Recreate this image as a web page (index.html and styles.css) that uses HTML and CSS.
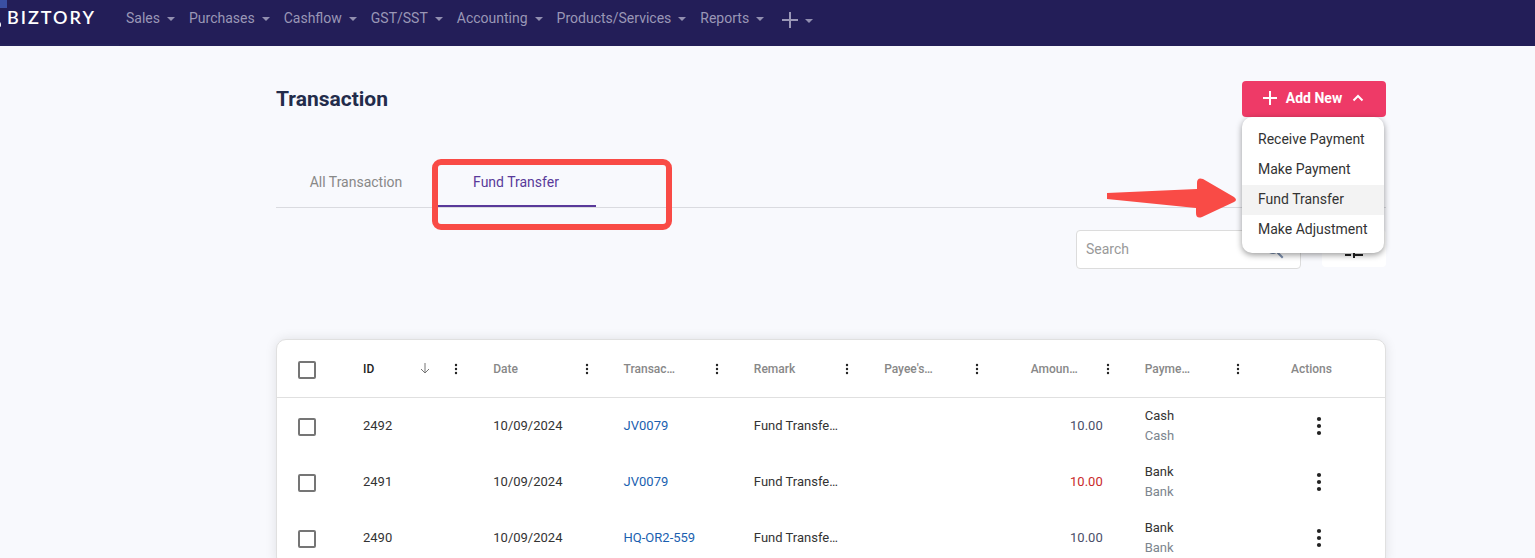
FILE: index.html
```
<!DOCTYPE html>
<html lang="en">
<head>
  <meta charset="UTF-8" />
  <meta name="viewport" content="width=device-width, initial-scale=1.0"/>
  <title>Transaction - Biztory</title>
  <link rel="stylesheet" href="styles.css">
</head>
<body>

<svg class="sprite" aria-hidden="true">
  <symbol id="dots" viewBox="0 0 24 24">
    <circle cx="12" cy="6" r="1.800"/><circle cx="12" cy="12" r="1.800"/><circle cx="12" cy="18" r="1.800"/>
  </symbol>
</svg>

<header class="navbar">
  <a class="brand" href="#">
    <svg class="brand-mark" viewBox="0 0 7 44" aria-hidden="true">
      <rect width="7" height="8" fill="#3a4fa3"/>
      <path d="M0 22q1 1 1 3t-1 2z" fill="#fff"/>
    </svg>
    BIZTORY
  </a>
  <nav class="menu">
    <a href="#">Sales</a>
    <a href="#">Purchases</a>
    <a href="#">Cashflow</a>
    <a href="#">GST/SST</a>
    <a href="#">Accounting</a>
    <a href="#">Products/Services</a>
    <a href="#">Reports</a>
    <a href="#" class="menu-add" aria-label="Add">
      <svg width="16" height="16" viewBox="0 0 16 16"><path d="M8 0v16M0 8h16" stroke="currentColor" stroke-width="2"/></svg>
    </a>
  </nav>
</header>

<main class="page">
  <div class="page-head">
    <h1>Transaction</h1>
    <div class="add-new">
      <button type="button" class="add-btn" aria-expanded="true">
        <svg width="16" height="16" viewBox="0 0 16 16"><path d="M8 1v14M1 8h14" stroke="currentColor" stroke-width="2"/></svg>
        <span>Add New</span>
        <svg width="12" height="12" viewBox="0 0 12 12"><path d="M1.500 8.500 6 4l4.500 4.500" fill="none" stroke="currentColor" stroke-width="2"/></svg>
      </button>
      <div class="dropdown">
        <a href="#">Receive Payment</a>
        <a href="#">Make Payment</a>
        <a href="#" class="hovered">Fund Transfer</a>
        <a href="#">Make Adjustment</a>
      </div>
      <svg class="arrow" width="130" height="40" viewBox="0 0 130 40" aria-hidden="true">
        <path d="M0 15 90 11V5q0-6 6-4l31 18q4 3 0 5L95 39q-6 2-6-4v-5L0 21z" fill="#f94b46"/>
      </svg>
    </div>
  </div>

  <nav class="tabs">
    <a href="#">All Transaction</a>
    <a href="#" class="active">Fund Transfer<span class="marker"></span></a>
  </nav>

  <div class="filters">
    <div class="search">
      <input type="text" placeholder="Search" aria-label="Search">
      <svg width="24" height="24" viewBox="0 0 24 24"><path fill="#7b8fae" d="M15.500 14h-.79l-.28-.27A6.470 6.470 0 0 0 16 9.500 6.500 6.500 0 1 0 9.500 16c1.610 0 3.090-.59 4.230-1.570l.27.28v.79l5 4.990L20.490 19l-4.990-5zm-6 0C7.010 14 5 11.990 5 9.500S7.010 5 9.500 5 14 7.010 14 9.500 11.990 14 9.500 14z"/></svg>
    </div>
    <button type="button" class="filter-btn" aria-label="Filter">
      <svg width="24" height="24" viewBox="0 0 24 24"><path d="M3 17v2h6v-2H3zM3 5v2h10V5H3zm10 16v-2h8v-2h-8v-2h-2v6h2zM7 9v2H3v2h4v2h2V9H7zm14 4v-2H11v2h10zm-6-4h2V7h4V5h-4V3h-2v6z"/></svg>
    </button>
  </div>

  <div class="card">
    <table>
      <colgroup>
        <col class="col-check">
        <col><col><col><col><col><col><col>
        <col class="col-actions">
      </colgroup>
      <thead>
        <tr>
          <th class="check"><input type="checkbox" aria-label="Select all"></th>
          <th class="sorted"><div class="th">
            <span>ID</span>
            <svg class="sort" width="16" height="16" viewBox="0 0 16 16"><path d="M8 2v10M4 8l4 4 4-4" fill="none" stroke="#757575"/></svg>
            <button type="button" aria-label="ID menu"><svg><use href="#dots"/></svg></button>
          </div></th>
          <th><div class="th"><span>Date</span><button type="button" aria-label="Date menu"><svg><use href="#dots"/></svg></button></div></th>
          <th><div class="th"><span>Transac…</span><button type="button" aria-label="Transaction menu"><svg><use href="#dots"/></svg></button></div></th>
          <th><div class="th"><span>Remark</span><button type="button" aria-label="Remark menu"><svg><use href="#dots"/></svg></button></div></th>
          <th><div class="th"><span>Payee's…</span><button type="button" aria-label="Payee menu"><svg><use href="#dots"/></svg></button></div></th>
          <th class="amount"><div class="th"><span>Amoun…</span><button type="button" aria-label="Amount menu"><svg><use href="#dots"/></svg></button></div></th>
          <th><div class="th"><span>Payme…</span><button type="button" aria-label="Payment menu"><svg><use href="#dots"/></svg></button></div></th>
          <th class="actions">Actions</th>
        </tr>
      </thead>
      <tbody>
        <tr>
          <td class="check"><input type="checkbox" aria-label="Select 2492"></td>
          <td>2492</td>
          <td>10/09/2024</td>
          <td><a href="#">JV0079</a></td>
          <td>Fund Transfe…</td>
          <td></td>
          <td class="amount">10.00</td>
          <td>Cash<small>Cash</small></td>
          <td class="actions"><button type="button" aria-label="Actions"><svg><use href="#dots"/></svg></button></td>
        </tr>
        <tr>
          <td class="check"><input type="checkbox" aria-label="Select 2491"></td>
          <td>2491</td>
          <td>10/09/2024</td>
          <td><a href="#">JV0079</a></td>
          <td>Fund Transfe…</td>
          <td></td>
          <td class="amount out">10.00</td>
          <td>Bank<small>Bank</small></td>
          <td class="actions"><button type="button" aria-label="Actions"><svg><use href="#dots"/></svg></button></td>
        </tr>
        <tr>
          <td class="check"><input type="checkbox" aria-label="Select 2490"></td>
          <td>2490</td>
          <td>10/09/2024</td>
          <td><a href="#">HQ-OR2-559</a></td>
          <td>Fund Transfe…</td>
          <td></td>
          <td class="amount">10.00</td>
          <td>Bank<small>Bank</small></td>
          <td class="actions"><button type="button" aria-label="Actions"><svg><use href="#dots"/></svg></button></td>
        </tr>
      </tbody>
    </table>
  </div>
</main>

</body>
</html>
```
FILE: styles.css
```
* {
  box-sizing: border-box;
}

body {
  margin: 0;
  font-family: Roboto, "Liberation Sans", sans-serif;
  font-size: 14px;
  background: #f8f9fd;
  color: #333;
}

a {
  text-decoration: none;
  color: inherit;
}

button {
  font-family: inherit;
  border: none;
  background: none;
  padding: 0;
  cursor: pointer;
}

svg {
  display: block;
  flex: none;
  fill: #222;
}

.sprite {
  position: absolute;
  width: 0;
  height: 0;
}

/* top bar */
.navbar {
  display: flex;
  height: 46px;
  background: #231e58;
}

.brand {
  display: flex;
  width: 119px;
  border-bottom: 2px solid #25225b;
  font-family: Lato, sans-serif;
  font-size: 18px;
  font-weight: 600;
  line-height: 35px;
  letter-spacing: 2px;
  color: #fff;
}

.brand-mark {
  width: 7px;
  height: 44px;
}

.menu {
  display: flex;
  gap: 14px;
  height: 36px;
  padding-left: 7px;
  align-items: center;
}

.menu a {
  display: flex;
  align-items: center;
  gap: 7px;
  color: #9a97b6;
}

.menu a::after {
  content: "";
  margin-top: 2px;
  border: 4px solid transparent;
  border-top-color: #928fb0;
  border-bottom: none;
}

.menu .menu-add {
  margin: 3px 0 0 4px;
}

/* page */
.page {
  padding: 35px 149px 0 276px;
}

.page-head {
  display: flex;
  justify-content: space-between;
  align-items: center;
}

h1 {
  margin: 0;
  font-size: 21px;
  font-weight: 700;
  color: #232c4b;
}

.add-new {
  position: relative;
}

.add-btn {
  display: flex;
  align-items: center;
  justify-content: center;
  gap: 8px;
  width: 144px;
  height: 36px;
  padding: 0 2px 2px 0;
  border-radius: 4px;
  background: #ee3a67;
  color: #fff;
  font-size: 14px;
  font-weight: 700;
}

.add-btn span {
  margin-right: 2px;
}

.dropdown {
  position: absolute;
  top: 100%;
  left: 0;
  z-index: 2;
  width: 142px;
  padding: 8px 0;
  border-radius: 10px;
  background: #fff;
  box-shadow: 0 2px 6px rgba(0, 0, 0, 0.4);
}

.dropdown a {
  display: block;
  padding: 0 0 2px 16px;
  line-height: 28px;
  white-space: nowrap;
}

.dropdown .hovered {
  background: #f3f3f3;
}

.arrow {
  position: absolute;
  top: 97px;
  right: 149px;
  z-index: 3;
}

.tabs {
  display: flex;
  margin-top: 40px;
  border-bottom: 1px solid #dadbe0;
}

.tabs a {
  position: relative;
  width: 160px;
  height: 50px;
  line-height: 50px;
  text-align: center;
  color: #888;
}

.tabs .active {
  color: #59399a;
  box-shadow: inset 0 -2px #59399a;
}

.marker {
  position: absolute;
  top: 2px;
  left: -4px;
  z-index: 1;
  width: 240px;
  height: 71px;
  border: 6px solid #f94b46;
  border-radius: 9px;
}

.filters {
  display: flex;
  justify-content: flex-end;
  gap: 21px;
  margin-top: 22px;
}

.search {
  display: flex;
  align-items: center;
  width: 225px;
  height: 39px;
  padding: 0 13px 0 9px;
  border: 1px solid #dcdcdc;
  border-radius: 4px;
  background: #fff;
}

.search input {
  flex: 1;
  min-width: 0;
  padding: 0 0 2px;
  border: none;
  outline: none;
  font: inherit;
}

.search input::placeholder {
  color: #999;
}

.filter-btn {
  display: flex;
  align-items: center;
  justify-content: center;
  width: 64px;
  height: 37px;
  padding-top: 1px;
  border-radius: 4px;
  background: #fff;
}

/* table */
.card {
  margin-top: 70px;
  border: 1px solid #e0e0e0;
  border-radius: 10px;
  background: #fff;
  box-shadow: 0 0 12px rgba(0, 0, 0, 0.1);
}

table {
  width: 100%;
  table-layout: fixed;
  border-spacing: 0;
  font-size: 13px;
}

.col-check {
  width: 76px;
}

.col-actions {
  width: 120px;
}

th {
  height: 58px;
  padding: 0 10px;
  border-bottom: 1px solid #e0e0e0;
  font-size: 12px;
  font-weight: 500;
  text-align: left;
  color: #888;
}

td {
  height: 56px;
  padding: 0 10px;
  line-height: 20px;
  white-space: nowrap;
}

td a {
  color: #1a5fb0;
}

td small {
  display: block;
  font-size: 13px;
  color: #7c858e;
}

.check {
  padding: 2px 0 0 21px;
}

.check input {
  display: block;
  appearance: none;
  width: 18px;
  height: 18px;
  margin: 0;
  border: 2px solid #757575;
  border-radius: 2px;
}

.th {
  display: flex;
  align-items: center;
  padding-right: 9px;
}

.th span {
  flex: 1;
}

.th .sort {
  margin-right: 15px;
}

.th button svg {
  width: 16px;
  height: 16px;
}

.sorted {
  color: #222;
}

th.amount span {
  margin-right: 22px;
  text-align: right;
}

td.amount {
  padding-right: 32px;
  text-align: right;
  color: #4a4e69;
}

td.out {
  color: #c92a2a;
}

th.actions {
  padding-left: 26px;
}

td.actions {
  padding-left: 40px;
}

td.actions button {
  display: block;
}

td.actions svg {
  width: 28px;
  height: 28px;
}
```
